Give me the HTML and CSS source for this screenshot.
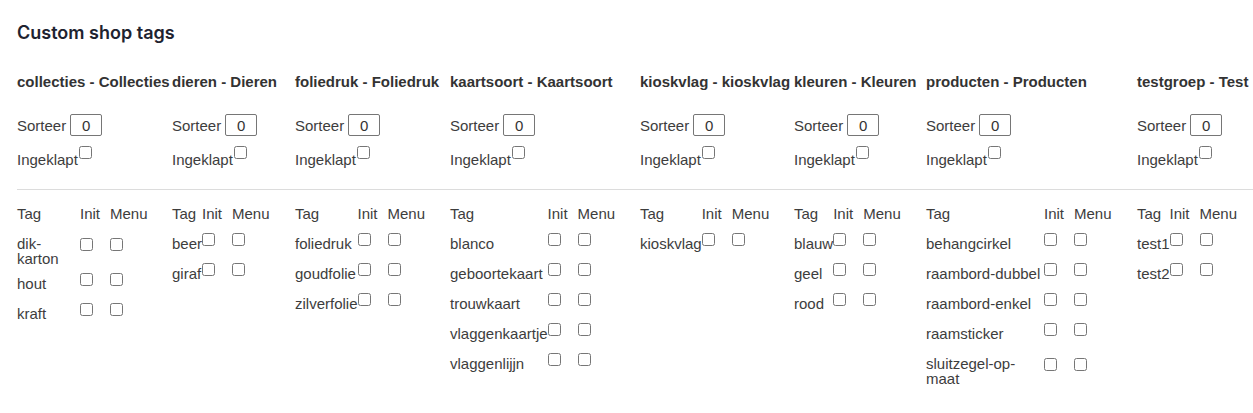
FILE: index.html
```html
<!DOCTYPE html>
<html>
<head>
    <title>Custom shop tags</title>
    <meta charset="UTF-8"/>
    <link rel="stylesheet" href="styles.css">
</head>
<body>
<div class="page">
    <h2 class="title">Custom shop tags</h2>

    <div class="groups">
        <h3 class="group-name">collecties - Collecties</h3>
        <h3 class="group-name">dieren - Dieren</h3>
        <h3 class="group-name">foliedruk - Foliedruk</h3>
        <h3 class="group-name">kaartsoort - Kaartsoort</h3>
        <h3 class="group-name">kioskvlag - kioskvlag</h3>
        <h3 class="group-name">kleuren - Kleuren</h3>
        <h3 class="group-name">producten - Producten</h3>
        <h3 class="group-name">testgroep - Test</h3>

        <div class="group-settings">
            <label class="sort">Sorteer <input class="sort-input" type="text" value="0"></label>
            <label class="collapsed">Ingeklapt<input type="checkbox"></label>
        </div>
        <div class="group-settings">
            <label class="sort">Sorteer <input class="sort-input" type="text" value="0"></label>
            <label class="collapsed">Ingeklapt<input type="checkbox"></label>
        </div>
        <div class="group-settings">
            <label class="sort">Sorteer <input class="sort-input" type="text" value="0"></label>
            <label class="collapsed">Ingeklapt<input type="checkbox"></label>
        </div>
        <div class="group-settings">
            <label class="sort">Sorteer <input class="sort-input" type="text" value="0"></label>
            <label class="collapsed">Ingeklapt<input type="checkbox"></label>
        </div>
        <div class="group-settings">
            <label class="sort">Sorteer <input class="sort-input" type="text" value="0"></label>
            <label class="collapsed">Ingeklapt<input type="checkbox"></label>
        </div>
        <div class="group-settings">
            <label class="sort">Sorteer <input class="sort-input" type="text" value="0"></label>
            <label class="collapsed">Ingeklapt<input type="checkbox"></label>
        </div>
        <div class="group-settings">
            <label class="sort">Sorteer <input class="sort-input" type="text" value="0"></label>
            <label class="collapsed">Ingeklapt<input type="checkbox"></label>
        </div>
        <div class="group-settings">
            <label class="sort">Sorteer <input class="sort-input" type="text" value="0"></label>
            <label class="collapsed">Ingeklapt<input type="checkbox"></label>
        </div>

        <hr class="divider">

        <table class="tags tags-collecties">
            <tr><th class="tag">Tag</th><th class="init">Init</th><th>Menu</th></tr>
            <tr><td class="tag">dik-karton</td><td><input type="checkbox"></td><td><input type="checkbox"></td></tr>
            <tr><td class="tag">hout</td><td><input type="checkbox"></td><td><input type="checkbox"></td></tr>
            <tr><td class="tag">kraft</td><td><input type="checkbox"></td><td><input type="checkbox"></td></tr>
        </table>

        <table class="tags">
            <tr><th class="tag">Tag</th><th class="init">Init</th><th>Menu</th></tr>
            <tr><td class="tag">beer</td><td><input type="checkbox"></td><td><input type="checkbox"></td></tr>
            <tr><td class="tag">giraf</td><td><input type="checkbox"></td><td><input type="checkbox"></td></tr>
        </table>

        <table class="tags">
            <tr><th class="tag">Tag</th><th class="init">Init</th><th>Menu</th></tr>
            <tr><td class="tag">foliedruk</td><td><input type="checkbox"></td><td><input type="checkbox"></td></tr>
            <tr><td class="tag">goudfolie</td><td><input type="checkbox"></td><td><input type="checkbox"></td></tr>
            <tr><td class="tag">zilverfolie</td><td><input type="checkbox"></td><td><input type="checkbox"></td></tr>
        </table>

        <table class="tags">
            <tr><th class="tag">Tag</th><th class="init">Init</th><th>Menu</th></tr>
            <tr><td class="tag">blanco</td><td><input type="checkbox"></td><td><input type="checkbox"></td></tr>
            <tr><td class="tag">geboortekaart</td><td><input type="checkbox"></td><td><input type="checkbox"></td></tr>
            <tr><td class="tag">trouwkaart</td><td><input type="checkbox"></td><td><input type="checkbox"></td></tr>
            <tr><td class="tag">vlaggenkaartje</td><td><input type="checkbox"></td><td><input type="checkbox"></td></tr>
            <tr><td class="tag">vlaggenlijjn</td><td><input type="checkbox"></td><td><input type="checkbox"></td></tr>
        </table>

        <table class="tags">
            <tr><th class="tag">Tag</th><th class="init">Init</th><th>Menu</th></tr>
            <tr><td class="tag">kioskvlag</td><td><input type="checkbox"></td><td><input type="checkbox"></td></tr>
        </table>

        <table class="tags">
            <tr><th class="tag">Tag</th><th class="init">Init</th><th>Menu</th></tr>
            <tr><td class="tag">blauw</td><td><input type="checkbox"></td><td><input type="checkbox"></td></tr>
            <tr><td class="tag">geel</td><td><input type="checkbox"></td><td><input type="checkbox"></td></tr>
            <tr><td class="tag">rood</td><td><input type="checkbox"></td><td><input type="checkbox"></td></tr>
        </table>

        <table class="tags tags-producten">
            <tr><th class="tag">Tag</th><th class="init">Init</th><th>Menu</th></tr>
            <tr><td class="tag">behangcirkel</td><td><input type="checkbox"></td><td><input type="checkbox"></td></tr>
            <tr><td class="tag">raambord-dubbel</td><td><input type="checkbox"></td><td><input type="checkbox"></td></tr>
            <tr><td class="tag">raambord-enkel</td><td><input type="checkbox"></td><td><input type="checkbox"></td></tr>
            <tr><td class="tag">raamsticker</td><td><input type="checkbox"></td><td><input type="checkbox"></td></tr>
            <tr><td class="tag">sluitzegel-op-maat</td><td><input type="checkbox"></td><td><input type="checkbox"></td></tr>
        </table>

        <table class="tags">
            <tr><th class="tag">Tag</th><th class="init">Init</th><th>Menu</th></tr>
            <tr><td class="tag">test1</td><td><input type="checkbox"></td><td><input type="checkbox"></td></tr>
            <tr><td class="tag">test2</td><td><input type="checkbox"></td><td><input type="checkbox"></td></tr>
        </table>
    </div>
</div>
</body>
</html>
```

FILE: styles.css
```css
body {
    margin: 0;
    background-color: #fff;
    color: #3d3d3d;
    font-family: "Liberation Sans", Arial, sans-serif;
    font-size: 15px;
    overflow: hidden;
}

.page {
    padding: 23px 0 0 17px;
}

.title {
    margin: 0;
    font-family: Inter, "Liberation Sans", sans-serif;
    font-size: 18px;
    font-weight: 600;
    line-height: 20px;
    color: #1e2330;
}

/* one column per tag group, rows line up across groups */
.groups {
    display: grid;
    grid-template-columns: 155px 123px 155px 190px 154px 132px 211px 116px;
    margin-top: 30px;
}

.group-name {
    margin: 0;
    font-size: 15px;
    font-weight: bold;
    line-height: 17px;
    color: #333;
    white-space: nowrap;
}

.group-settings {
    display: flex;
    flex-direction: column;
    align-items: flex-start;
    gap: 10px;
    padding-top: 24px;
}

.sort {
    display: flex;
    align-items: center;
    gap: 4px;
}

.sort-input {
    box-sizing: border-box;
    width: 32px;
    height: 22px;
    padding: 0;
    border: 1px solid #767676;
    border-radius: 2px;
    font: inherit;
    color: #333;
    text-align: center;
}

.collapsed {
    line-height: 17px;
}

.collapsed input {
    margin: 0 0 0 1px;
    vertical-align: 6px;
}

.divider {
    grid-column: 1 / -1;
    margin: 21px 0 8px;
    border: 0;
    border-top: 1px solid #dcdcdc;
}

.tags {
    border-collapse: collapse;
    align-self: start;
    justify-self: start;
}

.tags th,
.tags td {
    padding: 5px 0;
    line-height: 15px;
    font-weight: normal;
    text-align: left;
    vertical-align: middle;
}

.tags th {
    padding: 7.5px 0;
}

.tags td.tag {
    padding: 7.5px 0 2.5px;
    vertical-align: top;
}

.tags .init {
    width: 30px;
}

.tags input {
    display: block;
    margin: 0 0 7px;
}

.tags-collecties .tag {
    width: 63px;
}

.tags-producten .tag {
    width: 118px;
}
```
